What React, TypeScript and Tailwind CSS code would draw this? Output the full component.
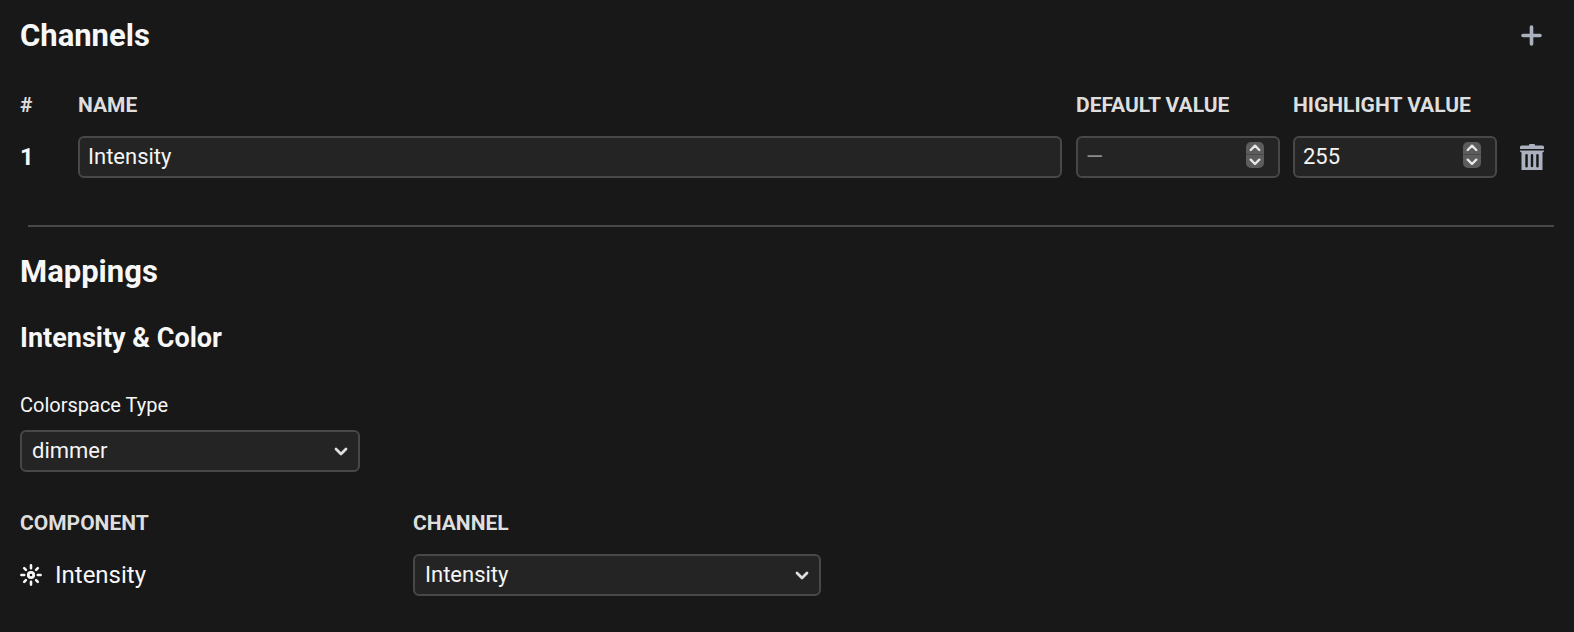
import { useState } from "react";
import { clsx } from "clsx";

interface Channel {
  id: number;
  name: string;
  defaultValue: string;
  highlightValue: string;
}

const COLORSPACES = ["dimmer", "rgb", "rgbw", "cmy"];

const FIELD = "rounded-[6px] border-2 border-[#484848] bg-[#242424] text-[22px] leading-7 text-[#f5f5f5]";
const HEAD = "p-0 pb-[17px] text-left text-[21px] leading-7 font-bold uppercase text-[#dedede]";

function TrashIcon() {
  return (
    <svg width="24" height="26" viewBox="0 0 24 26" fill="currentColor" aria-hidden="true">
      <path d="M9 1Q9 0 10 0H14Q15 0 15 1V1.5H22.5Q24 1.5 24 3V5H0V3Q0 1.5 1.5 1.5H9Z" />
      <path
        fillRule="evenodd"
        d="M0 6.5H24V7.5L22.5 8.5V26H1.5V8.5L0 7.5ZM6.5 10A1.25 1.25 0 0 0 5.3 11.2V22.3A1.25 1.25 0 0 0 7.8 22.3V11.2A1.25 1.25 0 0 0 6.5 10ZM12 10A1.25 1.25 0 0 0 10.8 11.2V22.3A1.25 1.25 0 0 0 13.2 22.3V11.2A1.25 1.25 0 0 0 12 10ZM17.5 10A1.25 1.25 0 0 0 16.2 11.2V22.3A1.25 1.25 0 0 0 18.7 22.3V11.2A1.25 1.25 0 0 0 17.5 10Z"
      />
    </svg>
  );
}

function PlusIcon() {
  return (
    <svg width="22" height="22" viewBox="0 0 22 22" stroke="currentColor" strokeWidth="3.6" strokeLinecap="round" aria-hidden="true">
      <path d="M10.5 2V19M2 10.5H19" />
    </svg>
  );
}

function IntensityIcon() {
  return (
    <svg width="22" height="22" viewBox="0 0 22 22" fill="none" stroke="currentColor" strokeWidth="2.6" strokeLinecap="round" aria-hidden="true">
      <circle cx="11" cy="11" r="2.7" strokeWidth="2.8" />
      <path d="M11 1.4V4.2M11 17.8V20.6M1.4 11H4.2M17.8 11H20.6M4.2 4.2L5.9 5.9M16.1 16.1L17.8 17.8M4.2 17.8L5.9 16.1M16.1 5.9L17.8 4.2" />
    </svg>
  );
}

function Chevron({ up = false, className }: { up?: boolean; className?: string }) {
  return (
    <svg viewBox="0 0 14 9" fill="none" stroke="currentColor" strokeWidth="2.8" strokeLinecap="round" strokeLinejoin="round" className={className} aria-hidden="true">
      <path d={up ? "M2 7L7 2L12 7" : "M2 2L7 7L12 2"} />
    </svg>
  );
}

interface NumberFieldProps {
  label: string;
  value: string;
  onChange: (value: string) => void;
}

function NumberField({ label, value, onChange }: NumberFieldProps) {
  const step = (delta: number) => {
    const next = Number(value || 0) + delta;
    onChange(String(Math.min(255, Math.max(0, next))));
  };

  return (
    <div className={clsx(FIELD, "flex items-start pr-3.5")}>
      <input
        type="number"
        min={0}
        max={255}
        aria-label={label}
        placeholder="—"
        value={value}
        onChange={(e) => onChange(e.target.value)}
        className="h-[38px] min-w-0 flex-1 appearance-none bg-transparent pb-0.5 pl-2 outline-none [-moz-appearance:textfield] placeholder:text-[#8c8c8c] [&::-webkit-inner-spin-button]:appearance-none"
      />
      <div className="mt-1 flex w-[18px] flex-col overflow-hidden rounded-[5px] bg-[#5c5c5c] text-[#e6e6e6]">
        <button type="button" aria-label={`Increase ${label}`} onClick={() => step(1)} className="flex h-[13px] items-center justify-center border-b border-[#4a4a4a]">
          <Chevron up className="w-3" />
        </button>
        <button type="button" aria-label={`Decrease ${label}`} onClick={() => step(-1)} className="flex h-[13px] items-center justify-center">
          <Chevron className="w-3" />
        </button>
      </div>
    </div>
  );
}

interface SelectFieldProps {
  id?: string;
  label?: string;
  value: string;
  options: string[];
  onChange: (value: string) => void;
}

function SelectField({ id, label, value, options, onChange }: SelectFieldProps) {
  return (
    <div className="relative">
      <select
        id={id}
        aria-label={label}
        value={value}
        onChange={(e) => onChange(e.target.value)}
        className={clsx(FIELD, "block h-[42px] w-full appearance-none px-2.5 outline-none")}
      >
        {options.map((option) => (
          <option key={option}>{option}</option>
        ))}
      </select>
      <Chevron className="pointer-events-none absolute top-[17px] right-3 w-3.5 text-[#dedede]" />
    </div>
  );
}

export default function App() {
  const [channels, setChannels] = useState<Channel[]>([
    { id: 1, name: "Intensity", defaultValue: "", highlightValue: "255" },
  ]);
  const [colorspace, setColorspace] = useState("dimmer");
  const [intensityChannel, setIntensityChannel] = useState("Intensity");

  const updateChannel = (id: number, patch: Partial<Channel>) => {
    setChannels(channels.map((c) => (c.id === id ? { ...c, ...patch } : c)));
  };

  const addChannel = () => {
    const id = Math.max(0, ...channels.map((c) => c.id)) + 1;
    setChannels([...channels, { id, name: "", defaultValue: "", highlightValue: "" }]);
  };

  return (
    <main className="min-h-screen bg-[#181818] px-5 py-4 font-[Roboto,'Liberation_Sans',sans-serif] text-[#f7f7f7]">
      <section>
        <div className="flex items-center justify-between">
          <h2 className="text-[31px] leading-10 font-bold">Channels</h2>
          <button type="button" aria-label="Add channel" onClick={addChannel} className="flex w-11 justify-center text-[#acb1c0]">
            <PlusIcon />
          </button>
        </div>

        <table className="mt-[35px] w-full table-fixed">
          <thead>
            <tr>
              <th className={clsx(HEAD, "w-[58px]")}>#</th>
              <th className={HEAD}>Name</th>
              <th className={clsx(HEAD, "w-[217px]")}>Default value</th>
              <th className={clsx(HEAD, "w-[217px]")}>Highlight value</th>
              <td className="w-11" />
            </tr>
          </thead>
          <tbody>
            {channels.map((channel, index) => (
              <tr key={channel.id}>
                <th className="p-0 text-left text-[24px] leading-8 font-bold">{index + 1}</th>
                <td className="p-0 pr-3.5">
                  <input
                    type="text"
                    aria-label="Name"
                    value={channel.name}
                    onChange={(e) => updateChannel(channel.id, { name: e.target.value })}
                    className={clsx(FIELD, "block h-[42px] w-full px-2 pb-0.5 outline-none")}
                  />
                </td>
                <td className="p-0 pr-[13px]">
                  <NumberField
                    label="Default value"
                    value={channel.defaultValue}
                    onChange={(defaultValue) => updateChannel(channel.id, { defaultValue })}
                  />
                </td>
                <td className="p-0 pr-[13px]">
                  <NumberField
                    label="Highlight value"
                    value={channel.highlightValue}
                    onChange={(highlightValue) => updateChannel(channel.id, { highlightValue })}
                  />
                </td>
                <td className="p-0">
                  <button
                    type="button"
                    aria-label="Delete channel"
                    onClick={() => setChannels(channels.filter((c) => c.id !== channel.id))}
                    className="flex w-full justify-center text-[#acb1c0]"
                  >
                    <TrashIcon />
                  </button>
                </td>
              </tr>
            ))}
          </tbody>
        </table>
      </section>

      <hr className="mt-[47px] mb-[25px] ml-2 border-t-2 border-[#484848]" />

      <section>
        <h2 className="text-[31px] leading-10 font-bold">Mappings</h2>
        <h3 className="mt-7 text-[27px] leading-9 font-bold">Intensity &amp; Color</h3>

        <div className="mt-[35px] w-[340px]">
          <label htmlFor="colorspace" className="mb-[11px] block text-[20px] leading-7">
            Colorspace Type
          </label>
          <SelectField id="colorspace" value={colorspace} options={COLORSPACES} onChange={setColorspace} />
        </div>

        <table className="mt-[37px] w-[801px] max-w-full table-fixed">
          <thead>
            <tr>
              <th className={clsx(HEAD, "w-[393px]")}>Component</th>
              <th className={HEAD}>Channel</th>
            </tr>
          </thead>
          <tbody>
            <tr>
              <td className="p-0">
                <div className="flex items-center gap-[13px] text-[24px] leading-8">
                  <IntensityIcon />
                  Intensity
                </div>
              </td>
              <td className="p-0">
                <SelectField
                  label="Channel"
                  value={intensityChannel}
                  options={channels.map((c) => c.name)}
                  onChange={setIntensityChannel}
                />
              </td>
            </tr>
          </tbody>
        </table>
      </section>
    </main>
  );
}
